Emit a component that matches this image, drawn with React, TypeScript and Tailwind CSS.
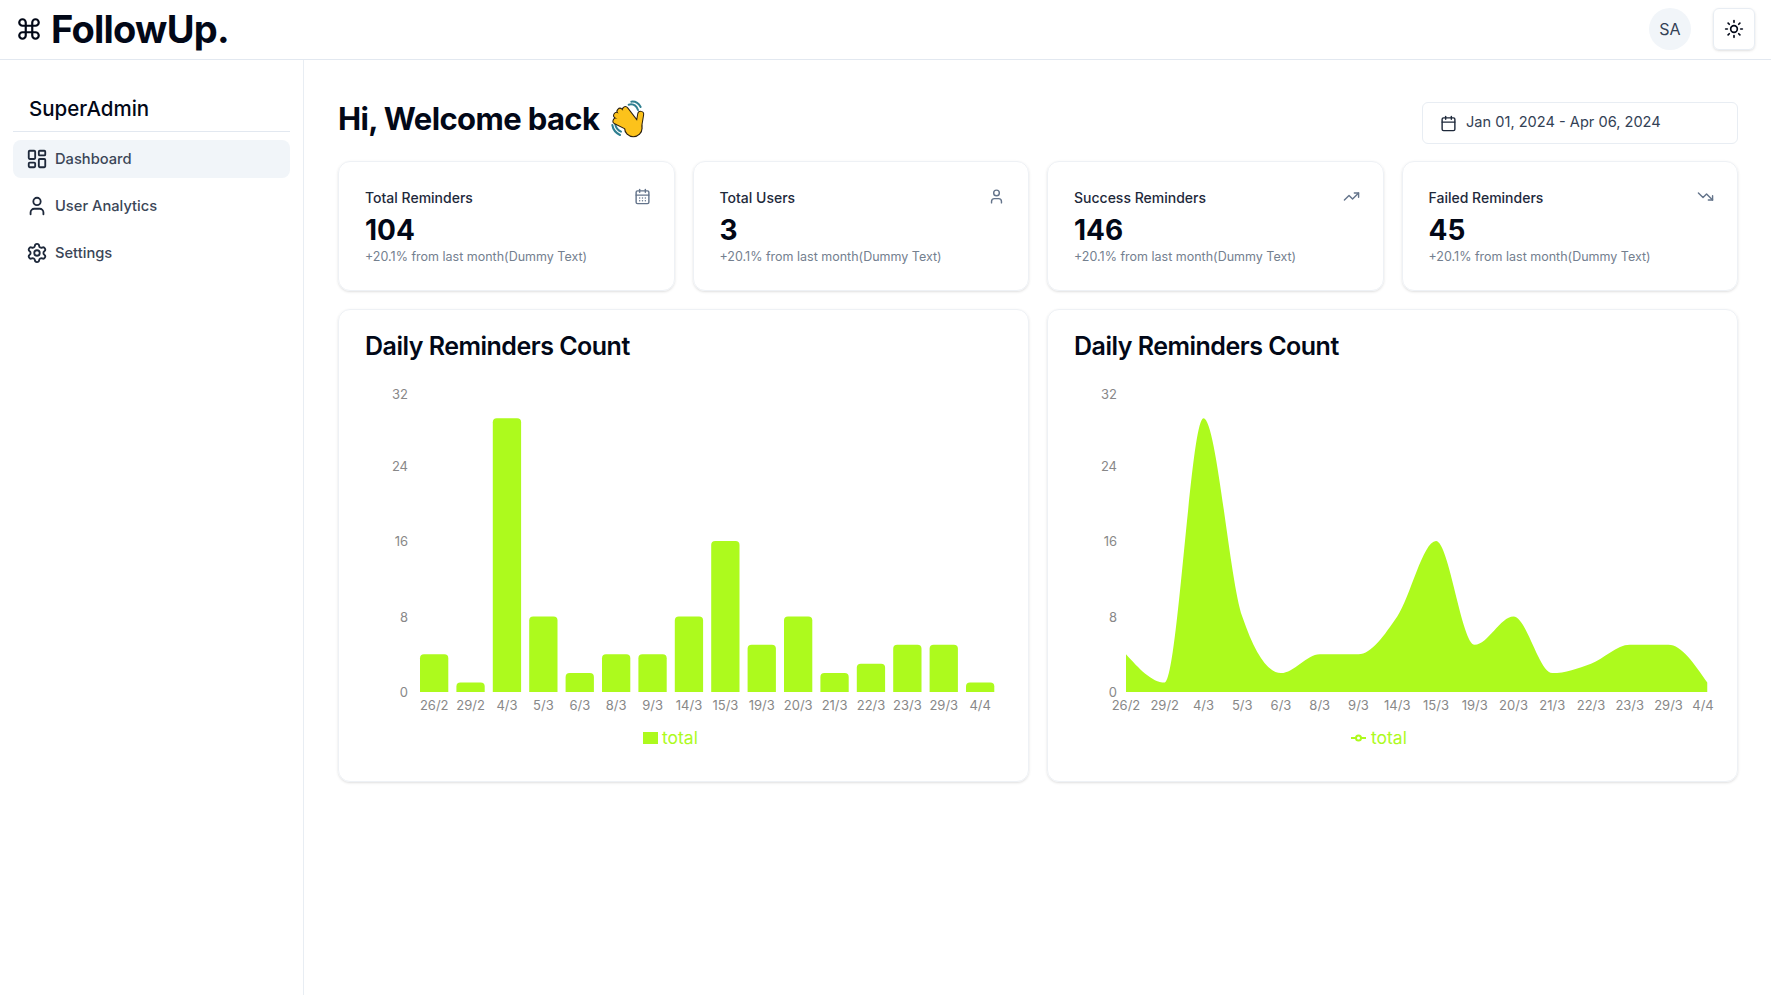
import { Calendar, CalendarDays, Command, LayoutDashboard, Settings, Sun, TrendingDown, TrendingUp, User } from "lucide-react";

const labels = ["26/2", "29/2", "4/3", "5/3", "6/3", "8/3", "9/3", "14/3", "15/3", "19/3", "20/3", "21/3", "22/3", "23/3", "29/3", "4/4"];
const values = [4, 1, 29, 8, 2, 4, 4, 8, 16, 5, 8, 2, 3, 5, 5, 1];
const LIME = "#adfa1d";
const BASE = 322;
const UNIT = 9.44;
const ticks: [string, number][] = [["32", 24], ["24", 96], ["16", 171], ["8", 247], ["0", 322]];

function monotonePath(pts: [number, number][]) {
  const n = pts.length;
  const d: number[] = [];
  const s: number[] = [];
  for (let i = 0; i < n - 1; i++) s.push((pts[i + 1][1] - pts[i][1]) / (pts[i + 1][0] - pts[i][0]));
  for (let i = 1; i < n - 1; i++) {
    const h0 = pts[i][0] - pts[i - 1][0];
    const h1 = pts[i + 1][0] - pts[i][0];
    const p = (s[i - 1] * h1 + s[i] * h0) / (h0 + h1);
    d[i] = (Math.sign(s[i - 1]) + Math.sign(s[i])) * Math.min(Math.abs(s[i - 1]), Math.abs(s[i]), 0.5 * Math.abs(p)) || 0;
  }
  d[0] = (3 * s[0] - d[1]) / 2;
  d[n - 1] = (3 * s[n - 2] - d[n - 2]) / 2;
  let path = `M${pts[0][0]},${pts[0][1]}`;
  for (let i = 0; i < n - 1; i++) {
    const h = (pts[i + 1][0] - pts[i][0]) / 3;
    path += `C${pts[i][0] + h},${pts[i][1] + h * d[i]} ${pts[i + 1][0] - h},${pts[i + 1][1] - h * d[i + 1]} ${pts[i + 1][0]},${pts[i + 1][1]}`;
  }
  return path;
}

function YAxis({ right }: { right: number }) {
  return (
    <>
      {ticks.map(([t, y]) => (
        <text key={t} x={right} y={y + 4.5} textAnchor="end" fontSize="13" fill="#888888">
          {t}
        </text>
      ))}
    </>
  );
}

function BarPanel() {
  return (
    <svg width="638" height="400" className="block overflow-visible">
      <YAxis right={43} />
      {values.map((v, i) => {
        const x = 55 + i * 36.4;
        const h = v * UNIT;
        return (
          <g key={i}>
            <path d={`M${x},${BASE}V${BASE - h + 4}Q${x},${BASE - h} ${x + 4},${BASE - h}H${x + 24.3}Q${x + 28.3},${BASE - h} ${x + 28.3},${BASE - h + 4}V${BASE}Z`} fill={LIME} />
            <text x={x + 14.2} y={339.5} textAnchor="middle" fontSize="13" fill="#888888">
              {labels[i]}
            </text>
          </g>
        );
      })}
      <rect x="278" y="362" width="15" height="12" fill={LIME} />
      <text x="297" y="373.500" fontSize="17.500" fill={LIME}>total</text>
    </svg>
  );
}

function AreaPanel() {
  const pts = values.map((v, i) => [52 + i * 38.75, BASE - v * UNIT] as [number, number]);
  const line = monotonePath(pts);
  return (
    <svg width="638" height="400" className="block overflow-visible">
      <YAxis right={43} />
      <path d={`${line}L${pts[15][0]},${BASE}L${pts[0][0]},${BASE}Z`} fill={LIME} />
      {labels.map((l, i) => (
        <text key={l} x={i === 15 ? 629 : pts[i][0]} y={339.5} textAnchor="middle" fontSize="13" fill="#888888">
          {l}
        </text>
      ))}
      <path d="M277,368H292" stroke={LIME} strokeWidth="2" />
      <circle cx="284.500" cy="368" r="2.500" fill="#ffffff" stroke={LIME} strokeWidth="2" />
      <text x="297" y="373.500" fontSize="17.500" fill={LIME}>total</text>
    </svg>
  );
}

function Hand() {
  const fingers = "M48,76L88,96M50,59L92,86M60,47L96,80M76,42L102,76M122,56L116,92";
  return (
    <svg width="36" height="40" viewBox="30 10 108 120" className="ml-[11px] shrink-0">
      <path d="M86,27Q106,22 114,43M94,18Q112,16 122,34" fill="none" stroke="#2f7f90" strokeWidth="6" strokeLinecap="round" />
      <path d="M37,88Q40,108 60,118M46,86Q48,101 63,108" fill="none" stroke="#2f7f90" strokeWidth="6" strokeLinecap="round" />
      <path d={fingers} fill="none" stroke="#2b2010" strokeWidth="21" strokeLinecap="round" />
      <circle cx="100" cy="97" r="28" fill="#2b2010" />
      <path d={fingers} fill="none" stroke="#fcc21b" strokeWidth="15" strokeLinecap="round" />
      <circle cx="100" cy="97" r="24.500" fill="#fcc21b" />
    </svg>
  );
}

const stats = [
  { title: "Total Reminders", value: "104", Icon: CalendarDays },
  { title: "Total Users", value: "3", Icon: User },
  { title: "Success Reminders", value: "146", Icon: TrendingUp },
  { title: "Failed Reminders", value: "45", Icon: TrendingDown },
];

const nav = [
  { label: "Dashboard", Icon: LayoutDashboard, active: true },
  { label: "User Analytics", Icon: User, active: false },
  { label: "Settings", Icon: Settings, active: false },
];

export default function App() {
  return (
    <div className="flex h-screen flex-col overflow-hidden bg-white text-[#020817] [font-family:Inter,'Liberation_Sans',sans-serif]">
      <header className="flex h-[60px] shrink-0 items-center justify-between border-b border-[#e2e8f0] px-[16px]">
        <div className="-mt-[1px] flex items-center gap-[9px]">
          <Command size={26} strokeWidth={2} />
          <span className="text-[38px] font-bold leading-10 tracking-[-0.02em]">FollowUp.</span>
        </div>
        <div className="-mt-[2px] flex items-center gap-[22px]">
          <div className="flex h-[42px] w-[42px] items-center justify-center rounded-full bg-[#f1f5f9] text-[16px] text-[#334155]">SA</div>
          <div className="flex h-[42px] w-[42px] items-center justify-center rounded-md border border-[#e8edf3] shadow-sm">
            <Sun size={20} strokeWidth={2} />
          </div>
        </div>
      </header>
      <div className="flex min-h-0 flex-1">
        <aside className="w-[304px] shrink-0 border-r border-[#e8edf3] px-[13px] pt-[34.500px]">
          <div className="border-b border-[#e2e8f0] pb-[8.500px] pl-[16px] text-[20.500px] font-medium leading-7">SuperAdmin</div>
          <nav className="mt-[8px] flex flex-col gap-[9px]">
            {nav.map(({ label, Icon, active }) => (
              <div key={label} className={`flex h-[38px] items-center gap-[7px] rounded-lg pl-[13px] text-[14.700px] font-medium text-[#3b4657] ${active ? "bg-[#f1f5f9]" : ""}`}>
                <Icon size={22} strokeWidth={2} className="text-[#1e293b]" />
                {label}
              </div>
            ))}
          </nav>
        </aside>
        <main className="flex-1 pl-[34px] pr-[33px] pt-[41px]">
          <div className="flex h-[43px] items-center justify-between">
            <h1 className="mb-[7px] flex items-center text-[31px] font-bold leading-9 tracking-[-0.02em]">
              Hi, Welcome back
              <Hand />
            </h1>
            <div className="mt-[1px] flex h-[42px] w-[316px] items-center gap-[9px] rounded-md border border-[#e8edf3] pl-[17px] text-[14.600px] text-[#334155]">
              <Calendar size={17} strokeWidth={2} className="text-[#1e293b]" />
              Jan 01, 2024 - Apr 06, 2024
            </div>
          </div>
          <div className="mt-[17px] grid grid-cols-4 gap-[18px]">
            {stats.map(({ title, value, Icon }) => (
              <div key={title} className="rounded-xl border border-[#eef1f5] px-[26px] pb-[25px] pt-[26px] shadow-sm">
                <div className="flex h-5 items-center justify-between">
                  <span className="text-[14px] font-medium leading-5 text-[#1e293b]">{title}</span>
                  <Icon size={17} strokeWidth={2} className="-mr-[3px] -mt-[3px] text-[#64748b]" />
                </div>
                <div className="mt-[6px] text-[28px] font-bold leading-8">{value}</div>
                <div className="mt-[3px] text-[12.500px] leading-4 text-[#74808f]">+20.1% from last month(Dummy Text)</div>
              </div>
            ))}
          </div>
          <div className="mt-[18px] grid grid-cols-2 gap-[18px]">
            <div className="rounded-xl border border-[#eef1f5] px-[26px] pb-[11px] pt-[20px] shadow-sm">
              <h2 className="text-[25px] font-semibold leading-8 tracking-[-0.02em]">Daily Reminders Count</h2>
              <div className="mt-[8px]">
                <BarPanel />
              </div>
            </div>
            <div className="rounded-xl border border-[#eef1f5] px-[26px] pb-[11px] pt-[20px] shadow-sm">
              <h2 className="text-[25px] font-semibold leading-8 tracking-[-0.02em]">Daily Reminders Count</h2>
              <div className="mt-[8px]">
                <AreaPanel />
              </div>
            </div>
          </div>
        </main>
      </div>
    </div>
  );
}
